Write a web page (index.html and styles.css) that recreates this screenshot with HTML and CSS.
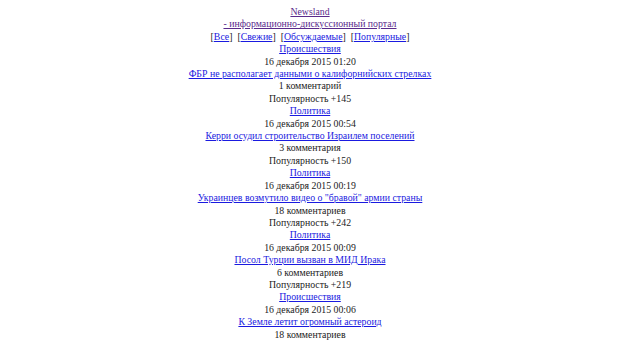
FILE: index.html
```html
<!DOCTYPE html>
<html lang="ru">
<head>
  <meta charset="UTF-8">
  <meta name="viewport" content="width=device-width, initial-scale=1.0">
  <title>Newsland</title>
  <link rel="stylesheet" href="styles.css">
</head>
<body>
  <div class="page">
    <!-- шапка -->
    <div class="head">
      <a class="seen" href="#">Newsland</a><br>
      <a class="seen" href="#">- информационно-дискуссионный портал</a><br>
      [<a href="#">Все</a>]&nbsp; [<a href="#">Свежие</a>]&nbsp; [<a href="#">Обсуждаемые</a>]&nbsp; [<a href="#">Популярные</a>]
    </div>

    <!-- новости -->
    <div class="news">
      <a href="#">Происшествия</a><br>
      16 декабря 2015 01:20<br>
      <a href="#">ФБР не располагает данными о калифорнийских стрелках</a><br>
      1 комментарий<br>
      Популярность +145
    </div>
    <div class="news">
      <a href="#">Политика</a><br>
      16 декабря 2015 00:54<br>
      <a href="#">Керри осудил строительство Израилем поселений</a><br>
      3 комментария<br>
      Популярность +150
    </div>
    <div class="news">
      <a href="#">Политика</a><br>
      16 декабря 2015 00:19<br>
      <a href="#">Украинцев возмутило видео о "бравой" армии страны</a><br>
      18 комментариев<br>
      Популярность +242
    </div>
    <div class="news">
      <a href="#">Политика</a><br>
      16 декабря 2015 00:09<br>
      <a href="#">Посол Турции вызван в МИД Ирака</a><br>
      6 комментариев<br>
      Популярность +219
    </div>
    <div class="news">
      <a href="#">Происшествия</a><br>
      16 декабря 2015 00:06<br>
      <a href="#">К Земле летит огромный астероид</a><br>
      18 комментариев<br>
      Популярность +165
    </div>
  </div>
</body>
</html>
```

FILE: styles.css
```css
body {
  margin: 0;
  padding: 6px 0 0;
  background: #fff;
  color: #222;
  font-family: "Liberation Serif", "Times New Roman", serif;
  font-size: 9.8px;
  line-height: 12.4px;
}
.page {
  text-align: center;
}
a {
  color: #1a1ae0;
  text-decoration: underline;
}
a.seen {
  color: #5a2a8b;
}
```
